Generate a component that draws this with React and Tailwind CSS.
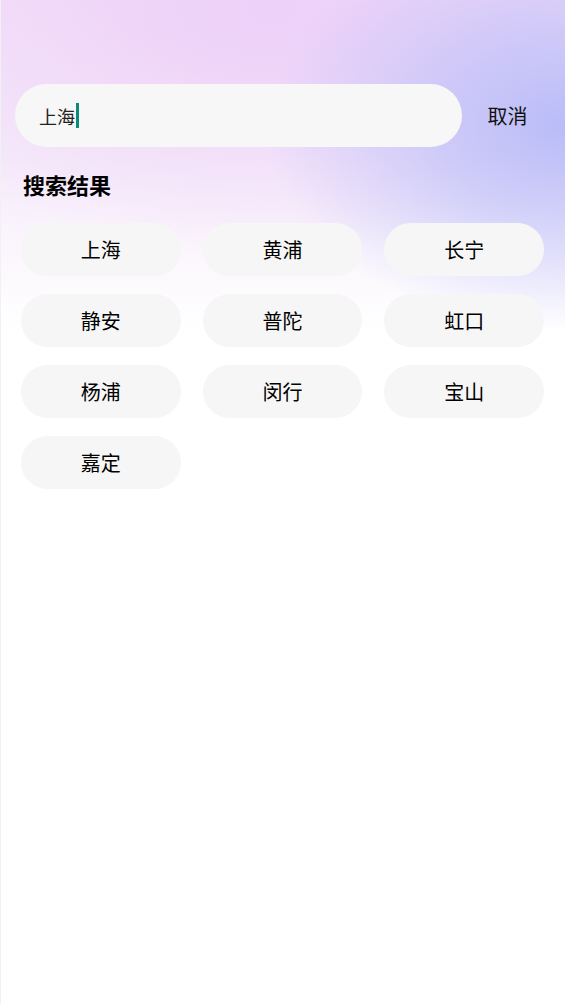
const districts = ["上海", "黄浦", "长宁", "静安", "普陀", "虹口", "杨浦", "闵行", "宝山", "嘉定"];

export default function App() {
  return (
    <div
      className="min-h-[1004px] w-full border-l border-[#f1f1f1] bg-white bg-no-repeat bg-[radial-gradient(ellipse_300px_205px_at_100%_125px,#b9bcf8_0%,rgba(185,188,248,0.6)_45%,rgba(185,188,248,0)_100%),radial-gradient(ellipse_460px_250px_at_48%_10px,#edd0f8_0%,rgba(237,208,248,0.5)_50%,rgba(237,208,248,0)_100%),linear-gradient(180deg,#f3e2f9_0px,#f6ecfa_160px,#ffffff_330px)]"
      style={{ fontFamily: '"Noto Sans CJK SC", "Noto Sans", sans-serif' }}
    >
      <div className="h-[84px]" />

      <div className="flex items-center pl-[14px] pr-[12px]">
        <div className="flex h-[63px] flex-1 items-center rounded-full bg-[#f7f7f7] pl-[24px]">
          <span className="text-[18px] leading-none text-[#222]">上海</span>
          <span className="ml-[1px] h-[25px] w-[3px] bg-[#0b8a78]" />
        </div>
        <button className="w-[91px] text-center text-[20px] leading-none text-[#111]">取消</button>
      </div>

      <h2 className="mt-[22px] pl-[22px] text-[22px] font-bold leading-[30px] text-black">搜索结果</h2>

      <div className="mt-[24px] grid grid-cols-3 gap-x-[22px] gap-y-[18px] pl-[20px] pr-[21px]">
        {districts.map((d) => (
          <div
            key={d}
            className="flex h-[53px] items-center justify-center rounded-full bg-[#f6f6f6] text-[20px] text-black"
          >
            {d}
          </div>
        ))}
      </div>
    </div>
  );
}
